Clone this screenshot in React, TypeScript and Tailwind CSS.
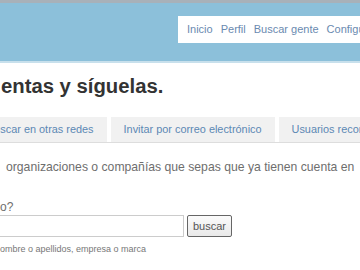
import React from 'react';

const navItems = ['Inicio', 'Perfil', 'Buscar gente', 'Configuración'];
const tabs = ['Buscar en otras redes', 'Invitar por correo electrónico', 'Usuarios recomendados'];

export default function App() {
  return (
    <div className="w-[360px] h-[270px] overflow-hidden bg-white font-['Liberation_Sans',Arial,sans-serif]">
      {/* top bar */}
      <div className="h-[3px] bg-[#a8b1b9]" />
      <div className="h-[58px] bg-[#8cc0da] flex items-start pl-[178px] pt-[13px]">
        <nav className="flex-1 h-[27px] bg-white flex items-center pl-[5px] whitespace-nowrap overflow-hidden">
          {navItems.map((item) => (
            <a key={item} className="px-[4px] text-[11px] text-[#6a8ab0]">
              {item}
            </a>
          ))}
        </nav>
      </div>
      <div className="h-[2px] bg-[#c8e0ec]" />

      <h1 className="mt-[11px] pl-[1px] text-[20.3px] leading-[24px] font-bold text-[#333333] whitespace-nowrap">
        entas y síguelas.
      </h1>

      <div className="mt-[19px] -ml-[26px] flex gap-[4px] border-b border-[#dddddd] whitespace-nowrap">
        {tabs.map((tab) => (
          <div key={tab} className="h-[25px] px-[13px] bg-[#f1f1f1] flex items-center text-[10.9px] text-[#5c88b4] shrink-0">
            {tab}
          </div>
        ))}
      </div>

      <p className="mt-[16px] pl-[6px] text-[12.2px] leading-[16px] text-[#6e6e6e] whitespace-nowrap">
        organizaciones o compañías que sepas que ya tienen cuenta en
      </p>

      <label className="block mt-[24px] text-[12px] leading-[16px] text-[#6e6e6e]">o?</label>
      <div className="flex items-center gap-[3px]">
        <input className="w-[184px] h-[22px] border border-l-0 border-[#cccccc] bg-white outline-none" />
        <button className="w-[45px] h-[22px] border border-[#666666] rounded-[2px] bg-gradient-to-b from-[#fbfbfb] to-[#e9e9e9] text-[11px] text-[#555555]">
          buscar
        </button>
      </div>
      <p className="mt-[6px] text-[9px] leading-[12px] text-[#777777] whitespace-nowrap">
        ombre o apellidos, empresa o marca
      </p>
    </div>
  );
}
